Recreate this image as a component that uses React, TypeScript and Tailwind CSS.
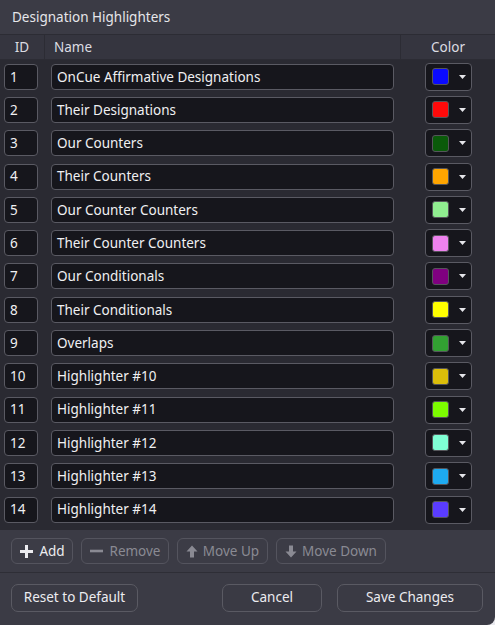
import React from "react";

type Highlighter = { id: number; name: string; color: string };

const highlighters: Highlighter[] = [
  { id: 1, name: "OnCue Affirmative Designations", color: "#0a0aff" },
  { id: 2, name: "Their Designations", color: "#ff0a0a" },
  { id: 3, name: "Our Counters", color: "#0a5a0a" },
  { id: 4, name: "Their Counters", color: "#ffa500" },
  { id: 5, name: "Our Counter Counters", color: "#90ee90" },
  { id: 6, name: "Their Counter Counters", color: "#ee82ee" },
  { id: 7, name: "Our Conditionals", color: "#800080" },
  { id: 8, name: "Their Conditionals", color: "#ffff00" },
  { id: 9, name: "Overlaps", color: "#32a032" },
  { id: 10, name: "Highlighter #10", color: "#dcbe0a" },
  { id: 11, name: "Highlighter #11", color: "#7cfc00" },
  { id: 12, name: "Highlighter #12", color: "#7fffd4" },
  { id: 13, name: "Highlighter #13", color: "#1eaaf0" },
  { id: 14, name: "Highlighter #14", color: "#5a3cff" },
];

function PlusIcon() {
  return (
    <svg width="15" height="15" viewBox="0 0 15 15">
      <path d="M7.5 1v13M1 7.5h13" stroke="currentColor" strokeWidth="3" />
    </svg>
  );
}

function MinusIcon() {
  return (
    <svg width="15" height="14" viewBox="0 0 15 14">
      <path d="M1 7h13" stroke="currentColor" strokeWidth="2.6" />
    </svg>
  );
}

function ArrowIcon({ down }: { down?: boolean }) {
  return (
    <svg
      width="12"
      height="13"
      viewBox="0 0 12 13"
      className={down ? "rotate-180" : ""}
    >
      <path d="M6 0.5L11.5 6.5H8V12.5H4V6.5H0.5Z" fill="currentColor" />
    </svg>
  );
}

function ToolButton({
  children,
  disabled,
  className,
}: {
  children: React.ReactNode;
  disabled?: boolean;
  className: string;
}) {
  return (
    <button
      className={`h-[26px] flex items-center justify-center gap-[5px] rounded-[6px] border border-[#54545e] bg-[#3c3c46] text-[13.5px] ${
        disabled ? "text-[#8a8a93]" : "text-[#ececf0]"
      } ${className}`}
    >
      {children}
    </button>
  );
}

export default function App() {
  return (
    <div
      className="w-[495px] h-[625px] bg-[#e9e9ee]"
      style={{ fontFamily: '"Noto Sans", "Open Sans", sans-serif' }}
    >
      <div className="w-full h-full flex flex-col bg-[#3b3b45] rounded-br-[8px] overflow-hidden text-[#e8e8ec]">
        {/* タイトル */}
        <div className="h-[34px] flex items-center pl-[12px] text-[13.5px] text-[#e6e6ea]">
          Designation Highlighters
        </div>

        {/* ヘッダー */}
        <div className="h-[26px] flex border-t border-b border-[#2c2c34] bg-[#35353f] text-[13.5px] text-[#dcdce2]">
          <div className="w-[45px] flex items-center justify-center border-r border-[#2c2c34]">
            ID
          </div>
          <div className="flex-1 flex items-center pl-[9px]">Name</div>
          <div className="w-[95px] flex items-center justify-center border-l border-[#2c2c34]">
            Color
          </div>
        </div>

        {/* 行 */}
        <div className="bg-[#2a2a32] pb-[4px]">
          {highlighters.map((h) => (
            <div key={h.id} className="h-[33.3px] flex items-center">
              <div className="w-[45px] flex pl-[4px]">
                <div className="w-[34px] h-[26px] flex items-center pl-[5px] rounded-[4px] border border-[#5a5a63] bg-[#16161c] text-[13.5px] text-[#f0f0f2]">
                  {h.id}
                </div>
              </div>
              <div className="w-[355px] flex pl-[6px]">
                <div className="w-[343px] h-[26px] flex items-center pl-[5px] rounded-[4px] border border-[#5a5a63] bg-[#16161c] text-[13.5px] text-[#f0f0f2]">
                  {h.name}
                </div>
              </div>
              <div className="flex-1 flex pl-[25px]">
                <div className="w-[47px] h-[28px] flex items-center pl-[6px] rounded-[4px] border border-[#5a5a63] bg-[#16161c]">
                  <div
                    className="w-[17px] h-[17px] rounded-[3px] border border-[#55555a]"
                    style={{ backgroundColor: h.color }}
                  />
                  <svg width="7" height="4" viewBox="0 0 7 4" className="ml-[10px]">
                    <path d="M0 0h7L3.5 4z" fill="#e6e6ea" />
                  </svg>
                </div>
              </div>
            </div>
          ))}
        </div>

        {/* ツールバー */}
        <div className="h-[43px] flex items-center pl-[11px] gap-[8px] border-b border-[#2e2e36]">
          <ToolButton className="w-[62px]">
            <PlusIcon />
            Add
          </ToolButton>
          <ToolButton disabled className="w-[88px]">
            <MinusIcon />
            Remove
          </ToolButton>
          <ToolButton disabled className="w-[91px]">
            <ArrowIcon />
            Move Up
          </ToolButton>
          <ToolButton disabled className="w-[110px]">
            <ArrowIcon down />
            Move Down
          </ToolButton>
        </div>

        {/* フッター */}
        <div className="flex-1 flex items-center pl-[11px] pr-[12px] pb-[3px]">
          <button className="w-[127px] h-[28px] rounded-[7px] border border-[#5a5a63] bg-[#3a3a44] text-[13.5px] text-[#ececf0]">
            Reset to Default
          </button>
          <div className="flex-1" />
          <button className="w-[100px] h-[28px] rounded-[7px] border border-[#5a5a63] bg-[#3a3a44] text-[13.5px] text-[#ececf0]">
            Cancel
          </button>
          <button className="ml-[15px] w-[146px] h-[28px] rounded-[7px] border border-[#5a5a63] bg-[#3a3a44] text-[13.5px] text-[#ececf0]">
            Save Changes
          </button>
        </div>
      </div>
    </div>
  );
}
